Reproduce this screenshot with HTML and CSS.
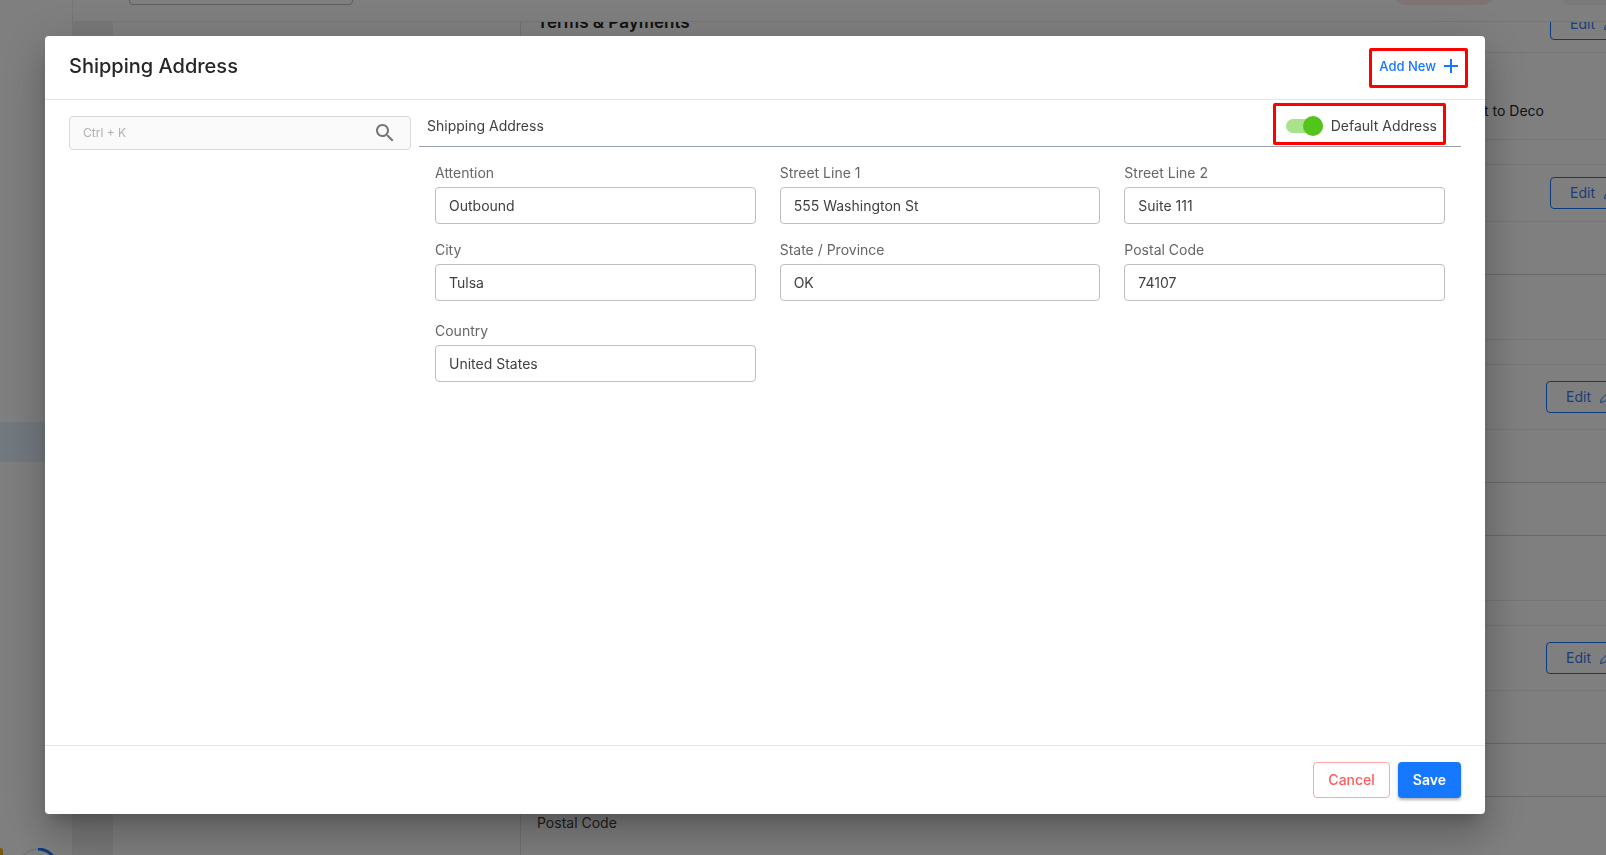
FILE: index.html
```html
<!DOCTYPE html>
<html lang="en">
<head>
    <meta charset="UTF-8">
    <meta name="viewport" content="width=device-width, initial-scale=1.0">
    <title>Shipping Address</title>
    <link rel="stylesheet" href="styles.css">
</head>
<body>
    <!-- Page behind the dialog -->
    <div class="app" inert>
        <aside class="sidebar">
            <a class="nav-active" href="#" aria-label="Customers"></a>
            <div class="sidebar-foot">
                <span class="badge"></span>
                <svg class="progress" viewBox="0 0 40 40" fill="none" stroke-width="2">
                    <circle cx="20" cy="20" r="19" stroke="#ececec"/>
                    <path d="M20 1a19 19 0 0 1 19 19" stroke="#1677ff" stroke-width="3"/>
                </svg>
            </div>
        </aside>

        <div class="main">
            <header class="topbar">
                <input class="top-search" type="text" aria-label="Search">
                <span class="chip chip-red"></span>
                <span class="chip chip-green"></span>
            </header>

            <div class="content">
                <div class="list"></div>
                <div class="details">
                    <section class="card">
                        <div class="card-head">
                            <h2>Terms &amp; Payments</h2>
                            <button class="edit-btn">Edit
                                <svg viewBox="0 0 14 14"><path d="M1.5 12.5l.8-3.4 7.6-7.6 2.6 2.6-7.6 7.6zM8.3 3.1l2.6 2.6"/></svg>
                            </button>
                        </div>
                        <div class="card-row terms">t to Deco</div>
                    </section>

                    <section class="card">
                        <div class="card-head">
                            <button class="edit-btn">Edit
                                <svg viewBox="0 0 14 14"><path d="M1.5 12.5l.8-3.4 7.6-7.6 2.6 2.6-7.6 7.6zM8.3 3.1l2.6 2.6"/></svg>
                            </button>
                        </div>
                        <div class="card-row"></div>
                        <div class="card-row"></div>
                    </section>

                    <section class="card card-tall">
                        <div class="card-head">
                            <button class="edit-btn">Edit
                                <svg viewBox="0 0 14 14"><path d="M1.5 12.5l.8-3.4 7.6-7.6 2.6 2.6-7.6 7.6zM8.3 3.1l2.6 2.6"/></svg>
                            </button>
                        </div>
                        <div class="card-row"></div>
                        <div class="card-row"></div>
                        <div class="card-row"></div>
                    </section>

                    <section class="card card-tall">
                        <div class="card-head">
                            <button class="edit-btn">Edit
                                <svg viewBox="0 0 14 14"><path d="M1.5 12.5l.8-3.4 7.6-7.6 2.6 2.6-7.6 7.6zM8.3 3.1l2.6 2.6"/></svg>
                            </button>
                        </div>
                        <div class="card-row"></div>
                        <div class="card-row"></div>
                        <div class="card-row">Postal Code</div>
                    </section>
                </div>
            </div>
        </div>
    </div>

    <!-- Dialog -->
    <div class="backdrop">
        <div class="dialog" role="dialog" aria-labelledby="dialogTitle">
            <header class="dialog-head">
                <h1 id="dialogTitle">Shipping Address</h1>
                <button class="add-btn marked">
                    Add New
                    <svg viewBox="0 0 14 14"><path d="M7 0v14M0 7h14"/></svg>
                </button>
            </header>

            <div class="dialog-body">
                <div class="search">
                    <input type="text" placeholder="Ctrl + K" aria-label="Search addresses">
                    <svg viewBox="0 0 24 24"><path d="M15.5 14h-.79l-.28-.27C15.41 12.59 16 11.11 16 9.5 16 5.91 13.09 3 9.5 3S3 5.91 3 9.5 5.91 16 9.5 16c1.61 0 3.09-.59 4.23-1.57l.27.28v.79l5 4.99L20.49 19l-4.99-5zm-6 0C7.01 14 5 11.99 5 9.5S7.01 5 9.5 5 14 7.01 14 9.5 11.99 14 9.5 14z"/></svg>
                </div>

                <div class="address">
                    <div class="address-head">
                        <span>Shipping Address</span>
                        <label class="toggle marked">
                            <input type="checkbox" checked>
                            Default Address
                        </label>
                    </div>

                    <form class="fields" id="addressForm">
                        <div class="field">
                            <label for="attention">Attention</label>
                            <input type="text" id="attention" value="Outbound">
                        </div>
                        <div class="field">
                            <label for="street1">Street Line 1</label>
                            <input type="text" id="street1" value="555 Washington St">
                        </div>
                        <div class="field">
                            <label for="street2">Street Line 2</label>
                            <input type="text" id="street2" value="Suite 111">
                        </div>
                        <div class="field">
                            <label for="city">City</label>
                            <input type="text" id="city" value="Tulsa">
                        </div>
                        <div class="field">
                            <label for="state">State / Province</label>
                            <input type="text" id="state" value="OK">
                        </div>
                        <div class="field">
                            <label for="postal">Postal Code</label>
                            <input type="text" id="postal" value="74107">
                        </div>
                        <div class="field field-country">
                            <label for="country">Country</label>
                            <input type="text" id="country" value="United States">
                        </div>
                    </form>
                </div>
            </div>

            <footer class="dialog-foot">
                <button class="btn btn-cancel" type="button">Cancel</button>
                <button class="btn btn-save" type="submit" form="addressForm">Save</button>
            </footer>
        </div>
    </div>
</body>
</html>
```

FILE: styles.css
```css
* {
    margin: 0;
    padding: 0;
    box-sizing: border-box;
}

body {
    font-family: Inter, 'Liberation Sans', sans-serif;
    font-size: 14px;
    line-height: 20px;
    color: #404040;
    background: #fff;
}

input,
button {
    font: inherit;
    color: inherit;
}

button {
    cursor: pointer;
}

/* Page behind the dialog */
.app {
    display: flex;
    height: 100vh;
    overflow: hidden;
}

.sidebar {
    flex: 0 0 73px;
    border-right: 1px solid #ececec;
    overflow: hidden;
}

.nav-active {
    display: block;
    height: 40px;
    margin-top: 422px;
    background: #e6f4ff;
}

.sidebar-foot {
    display: flex;
    gap: 15px;
    margin-top: 386px;
}

.badge {
    width: 3px;
    height: 32px;
    background: #faad14;
    border-radius: 0 4px 0 0;
}

.progress {
    width: 40px;
    height: 40px;
}

.main {
    flex: 1 0 auto;
    width: calc(100% - 21px);
    display: flex;
    flex-direction: column;
}

.topbar {
    flex: 0 0 22px;
    display: flex;
    align-items: flex-end;
    gap: 65px;
    padding: 0 15px 16px 56px;
    border-bottom: 1px solid #ececec;
    overflow: hidden;
}

.top-search {
    width: 224px;
    height: 36px;
    margin-right: auto;
    border: 1px solid #bfbfbf;
    border-radius: 4px;
    background: #fff;
}

.chip {
    width: 107px;
    height: 32px;
    border-radius: 16px;
}

.chip-red {
    background: #ffe9e9;
}

.chip-green {
    width: 80px;
    border-radius: 4px;
    background: #f0f7f4;
}

.content {
    flex: 1;
    min-height: 0;
    display: flex;
    overflow: hidden;
    border-left: 40px solid #f0f0f0;
}

.list {
    flex: 0 0 408px;
    border-right: 1px solid #e4e4ec;
}

.details {
    flex: 1;
    margin-top: -27px;
}

.card {
    border-top: 1px solid #ececec;
    margin-bottom: 24px;
}

.card-head {
    display: flex;
    align-items: center;
    height: 57px;
    padding: 0 24px 0 16px;
    border-bottom: 1px solid #ececec;
}

.card-head h2 {
    padding-bottom: 4px;
    font-size: 17px;
    font-weight: 600;
    color: #262626;
}

.card-row {
    height: 53px;
    padding: 16px;
    border-bottom: 1px solid #d4d4d4;
}

.card-row:last-child {
    height: 65px;
    border-color: #ececec;
}

.card-row.terms {
    height: 87px;
    padding: 48px 114px 0 0;
    text-align: right;
    color: #262626;
}

.card-tall .card-head {
    height: 65px;
    padding-right: 28px;
}

.edit-btn {
    display: flex;
    align-items: center;
    gap: 8px;
    width: 84px;
    height: 32px;
    margin-left: auto;
    padding: 0 19px;
    border: 1px solid #1677ff;
    border-radius: 4px;
    background: none;
    color: #3a7bf0;
}

.edit-btn svg {
    flex: none;
    width: 14px;
    height: 14px;
    fill: none;
    stroke: #1677ff;
}

/* Dialog */
.backdrop {
    position: fixed;
    inset: 0;
    display: flex;
    padding: 36px 121px 41px 45px;
    background: rgba(0, 0, 0, 0.5);
}

.dialog {
    flex: 1;
    display: flex;
    flex-direction: column;
    background: #fff;
    border-radius: 4px;
    box-shadow: 0 11px 15px -7px rgba(0, 0, 0, 0.2), 0 24px 38px 3px rgba(0, 0, 0, 0.14), 0 9px 46px 8px rgba(0, 0, 0, 0.12);
}

.dialog-head {
    display: flex;
    align-items: center;
    justify-content: space-between;
    height: 64px;
    padding: 0 24px 4px;
    border-bottom: 1px solid #e4e4e4;
}

.dialog-head h1 {
    font-size: 20px;
    font-weight: 500;
    color: #262626;
}

/* Red highlight frame around a control */
.marked {
    position: relative;
}

.marked::after {
    content: '';
    position: absolute;
    inset: -6px -7px -10px;
    border: 3px solid #ff0000;
    border-radius: 2px;
}

.add-btn {
    display: flex;
    align-items: center;
    gap: 8px;
    padding: 2px 3px;
    border: none;
    background: none;
    font-size: 13px;
    font-weight: 500;
    color: #1677ff;
}

.add-btn svg {
    width: 14px;
    height: 14px;
    stroke: #1677ff;
    stroke-width: 2;
}

.dialog-body {
    flex: 1;
    display: flex;
    align-items: flex-start;
    gap: 8px;
    padding: 16px 24px;
}

.search {
    flex: 0 0 342px;
    display: flex;
    align-items: center;
    height: 34px;
    padding: 0 13px;
    border: 1px solid #d9d9d9;
    border-radius: 4px;
    background: #fafafa;
}

.search input {
    flex: 1;
    min-width: 0;
    border: none;
    outline: none;
    background: none;
    font-size: 12px;
}

.search input::placeholder {
    color: #b0b0b0;
}

.search svg {
    width: 24px;
    height: 24px;
    fill: #757575;
}

.address {
    flex: 1;
}

.address-head {
    display: flex;
    justify-content: space-between;
    height: 31px;
    padding: 0 24px 0 8px;
    border-bottom: 1px solid #98a0b0;
}

.toggle {
    display: flex;
    align-items: center;
    gap: 8px;
    height: 20px;
}

.toggle::after {
    inset: -13px -9px -9px -13px;
}

.toggle input {
    appearance: none;
    display: flex;
    align-items: center;
    width: 37px;
    height: 14px;
    border-radius: 7px;
    background: #d9d9d9;
}

.toggle input::before {
    content: '';
    flex: none;
    width: 20px;
    height: 20px;
    border-radius: 50%;
    background: #fff;
}

.toggle input:checked {
    justify-content: flex-end;
    background: #a8e38c;
}

.toggle input:checked::before {
    background: #52c41a;
}

.fields {
    display: grid;
    grid-template-columns: repeat(3, 1fr);
    gap: 16px 24px;
    padding: 16px;
}

.field {
    display: flex;
    flex-direction: column;
    gap: 4px;
    min-width: 0;
}

.field-country {
    margin-top: 4px;
}

.field label {
    color: #666;
}

.field input {
    width: 100%;
    height: 37px;
    padding: 0 13px;
    border: 1px solid #bfbfbf;
    border-radius: 4px;
    background: #fff;
}

.dialog-foot {
    display: flex;
    justify-content: flex-end;
    gap: 8px;
    padding: 16px 24px;
    border-top: 1px solid #e4e4e4;
}

.btn {
    height: 36px;
    padding: 0 14px;
    border: 1px solid transparent;
    border-radius: 4px;
    font-weight: 500;
}

.btn-cancel {
    border-color: #ffa3a5;
    background: #fff;
    color: #ff5b5e;
}

.btn-save {
    background: #1677ff;
    color: #fff;
    font-weight: 600;
    box-shadow: 0 2px 3px rgba(0, 0, 0, 0.3);
}
```
